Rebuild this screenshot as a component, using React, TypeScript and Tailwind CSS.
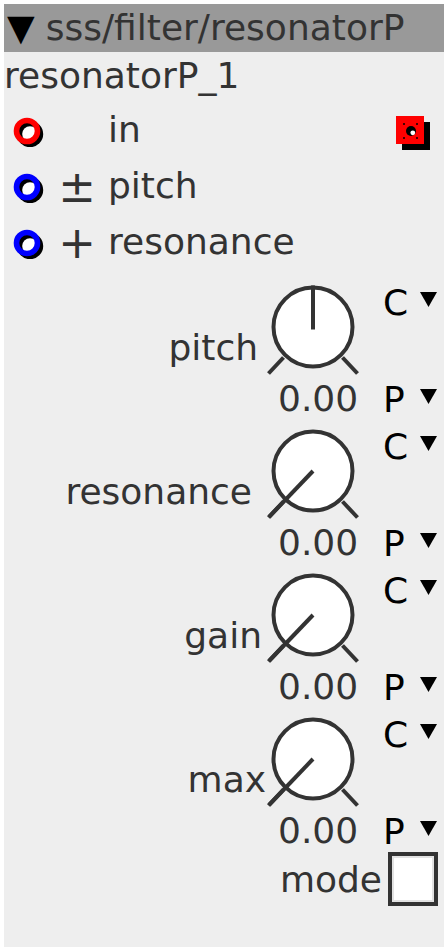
import React from "react";

function Tri() {
  return (
    <svg width="17" height="15" viewBox="0 0 17 15" className="mt-[7px] shrink-0">
      <polygon points="0,0 17,0 8.5,15" fill="#000" />
    </svg>
  );
}

function InPort({ color }: { color: string }) {
  return (
    <svg width="34" height="34" viewBox="0 0 34 34" className="shrink-0">
      <circle cx="18" cy="21" r="13.2" fill="#000" />
      <circle cx="18" cy="21" r="7.8" fill="#fff" />
      <circle cx="15" cy="18" r="10.5" fill="none" stroke={color} strokeWidth="5.6" />
    </svg>
  );
}

function OutPort() {
  return (
    <svg width="40" height="40" viewBox="0 0 40 40" className="shrink-0">
      <rect x="8" y="12" width="28" height="28" fill="#000" />
      <rect x="2" y="6" width="28" height="28" fill="#ff0000" />
      <circle cx="17" cy="21" r="5" fill="#000" />
      <circle cx="18.8" cy="22.8" r="2.4" fill="#fff" />
      <rect x="9" y="13" width="2" height="2" fill="#400" />
      <rect x="22" y="13" width="2" height="2" fill="#400" />
      <rect x="9" y="27" width="2" height="2" fill="#400" />
      <rect x="22" y="27" width="2" height="2" fill="#400" />
    </svg>
  );
}

function Knob({ center }: { center?: boolean }) {
  return (
    <svg width="100" height="96" viewBox="0 0 100 96" className="shrink-0">
      <circle cx="50" cy="44" r="39.5" fill="#fff" stroke="#333" strokeWidth="4" />
      <line x1="20.5" y1="74.5" x2="5.5" y2="90.5" stroke="#333" strokeWidth="4" />
      <line x1="79.5" y1="74.5" x2="94.5" y2="90.5" stroke="#333" strokeWidth="4" />
      {center ? (
        <line x1="50" y1="2.5" x2="50" y2="46.5" stroke="#333" strokeWidth="4" />
      ) : (
        <line x1="50" y1="44" x2="6" y2="90" stroke="#333" strokeWidth="4" />
      )}
    </svg>
  );
}

function Group({
  label,
  labelCls,
  center,
}: {
  label: string;
  labelCls: string;
  center?: boolean;
}) {
  return (
    <div className="flex h-[144px]">
      <div className="flex flex-1 justify-end pt-[55px]">
        <span className={labelCls}>{label}</span>
      </div>
      <div className="flex w-[100px] flex-col pt-[8px]">
        <Knob center={center} />
        <span className="mt-[2px] pl-[15px] leading-[36px]">0.00</span>
      </div>
      <div className="ml-[20px] flex w-[61px] flex-col pt-[10px] text-black">
        <div className="flex h-[36px] items-start">
          <span className="w-[37px] leading-[36px]">C</span>
          <Tri />
        </div>
        <div className="mt-[61px] flex h-[36px] items-start">
          <span className="w-[37px] leading-[36px]">P</span>
          <Tri />
        </div>
      </div>
    </div>
  );
}

export default function App() {
  return (
    <div className="min-h-[952px] bg-white p-[4px]">
      <div className="flex h-[943px] w-[440px] flex-col bg-[#eeeeee] font-['DejaVu_Sans',sans-serif] text-[36px] text-[#333]">
        <div className="flex h-[48px] items-center bg-[#999999] pl-[3px] leading-[48px] whitespace-nowrap">
          <span className="text-black">▼</span>
          <span className="ml-[11px]">sss/filter/resonatorP</span>
        </div>
        <div className="h-[50px] leading-[47px]">resonatorP_1</div>
        <div className="flex h-[56px] items-center">
          <div className="ml-[8px]">
            <InPort color="#ff0000" />
          </div>
          <div className="w-[62px]" />
          <span className="leading-[36px]">in</span>
          <div className="flex-1" />
          <div className="mr-[10px]">
            <OutPort />
          </div>
        </div>
        <div className="flex h-[56px] items-center">
          <div className="ml-[8px]">
            <InPort color="#0000ff" />
          </div>
          <div className="flex w-[62px] justify-center text-[45px] leading-[45px]">±</div>
          <span className="leading-[36px]">pitch</span>
        </div>
        <div className="flex h-[56px] items-center">
          <div className="ml-[8px]">
            <InPort color="#0000ff" />
          </div>
          <div className="flex w-[62px] justify-center text-[45px] leading-[45px]">+</div>
          <span className="leading-[36px]">resonance</span>
        </div>
        <div className="h-[5px]" />
        <Group label="pitch" labelCls="mr-[5px] leading-[36px]" center />
        <Group label="resonance" labelCls="mr-[11px] leading-[36px]" />
        <Group label="gain" labelCls="mr-[1px] leading-[36px]" />
        <Group label="max" labelCls="-mr-[3px] leading-[36px]" />
        <div className="flex h-[56px] items-start justify-end pr-[6px] pt-[1px]">
          <span className="mt-[10px] leading-[36px]">mode</span>
          <div className="ml-[6px] h-[54px] w-[50px] border-[4px] border-[#333] bg-white shadow-[inset_0_0_0_2px_#e2e2e2]" />
        </div>
      </div>
    </div>
  );
}
